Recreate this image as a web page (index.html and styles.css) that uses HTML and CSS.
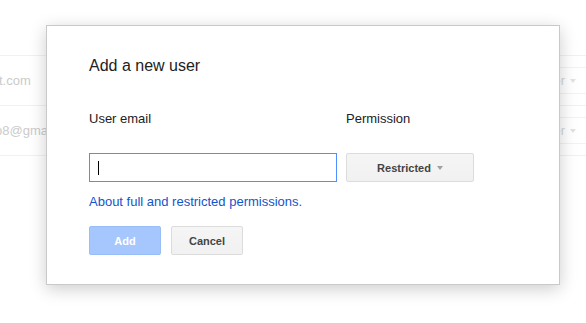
FILE: index.html
```html
<!DOCTYPE html>
<html>
<head>
<meta charset="utf-8">
<link rel="stylesheet" href="styles.css">
</head>
<body>
<div class="bg">
  <div class="bg-row">
    <span class="bg-email first">t.com</span>
    <span class="owner">Owner <i class="bg-arrow"></i></span>
  </div>
  <div class="bg-row">
    <span class="bg-email second">o8@gmail.com</span>
    <span class="owner">Owner <i class="bg-arrow"></i></span>
  </div>
  <div class="bg-row last"></div>
</div>

<div class="dialog">
  <h1 class="title">Add a new user</h1>
  <div class="form">
    <div class="label">User email</div>
    <div class="label">Permission</div>
    <div class="field"><span class="caret"></span></div>
    <div class="btn select">Restricted <i class="arrow"></i></div>
  </div>
  <a class="link" href="#">About full and restricted permissions.</a>
  <div class="actions">
    <div class="btn primary">Add</div>
    <div class="btn">Cancel</div>
  </div>
</div>
</body>
</html>
```

FILE: styles.css
```css
html, body {
  margin: 0;
  padding: 0;
  background: #fff;
  overflow: hidden;
  font-family: "Liberation Sans", Arial, sans-serif;
}

body {
  width: 586px;
  height: 323px;
  position: relative;
}

.bg {
  padding-top: 55px;
}

.bg-row {
  height: 50px;
  box-sizing: border-box;
  border-top: 1px solid #f1f1f1;
  display: flex;
  align-items: center;
  justify-content: space-between;
}

.bg-row.last {
  height: 20px;
}

.bg-email {
  font-size: 13px;
  color: #cbcbcb;
  white-space: nowrap;
}

.bg-email.first {
  margin-left: -1px;
}

.bg-email.second {
  margin-left: -5px;
}

.owner {
  height: 27px;
  box-sizing: border-box;
  border-top: 1px solid #f2f2f2;
  border-bottom: 1px solid #f2f2f2;
  display: flex;
  align-items: center;
  gap: 5px;
  padding: 0 10px 0 20px;
  font-size: 13px;
  color: #d6d6d6;
}

.bg-arrow {
  width: 0;
  height: 0;
  border-left: 3.5px solid transparent;
  border-right: 3.5px solid transparent;
  border-top: 4px solid #e2e2e2;
}

.dialog {
  position: absolute;
  left: 46px;
  top: 25px;
  width: 514px;
  box-sizing: border-box;
  background: #fff;
  border: 1px solid #c9c9c9;
  box-shadow: 0 4px 16px rgba(0, 0, 0, 0.2);
  padding: 30px 42px 29px 42px;
}

.title {
  margin: 0;
  font-size: 16px;
  line-height: 20px;
  font-weight: normal;
  color: #222;
}

.form {
  margin-top: 35px;
  display: grid;
  grid-template-columns: 248px 128px;
  column-gap: 9px;
  row-gap: 26px;
}

.label {
  font-size: 13px;
  line-height: 16px;
  color: #222;
}

.field {
  height: 29px;
  box-sizing: border-box;
  border: 1px solid #4d90fe;
  display: flex;
  align-items: center;
  padding-left: 8px;
  background: #fff;
}

.caret {
  width: 1px;
  height: 14px;
  background: #000;
}

.link {
  display: block;
  margin-top: 12px;
  font-size: 13px;
  line-height: 16px;
  color: #1155cc;
  text-decoration: none;
  width: max-content;
}

.actions {
  margin-top: 16px;
  display: flex;
  gap: 10px;
}

.btn {
  height: 29px;
  width: 72px;
  box-sizing: border-box;
  border: 1px solid #dcdcdc;
  border-radius: 2px;
  background: linear-gradient(#f5f5f5, #f1f1f1);
  color: #444;
  font-size: 11px;
  font-weight: bold;
  display: flex;
  align-items: center;
  justify-content: center;
}

.btn.select {
  width: 128px;
  gap: 6px;
}

.arrow {
  width: 0;
  height: 0;
  border-left: 3.5px solid transparent;
  border-right: 3.5px solid transparent;
  border-top: 4px solid #a0a0a0;
  margin-top: 1px;
}

.btn.primary {
  background: #a6c7fe;
  border-color: #98bdf7;
  color: #fff;
}
```
